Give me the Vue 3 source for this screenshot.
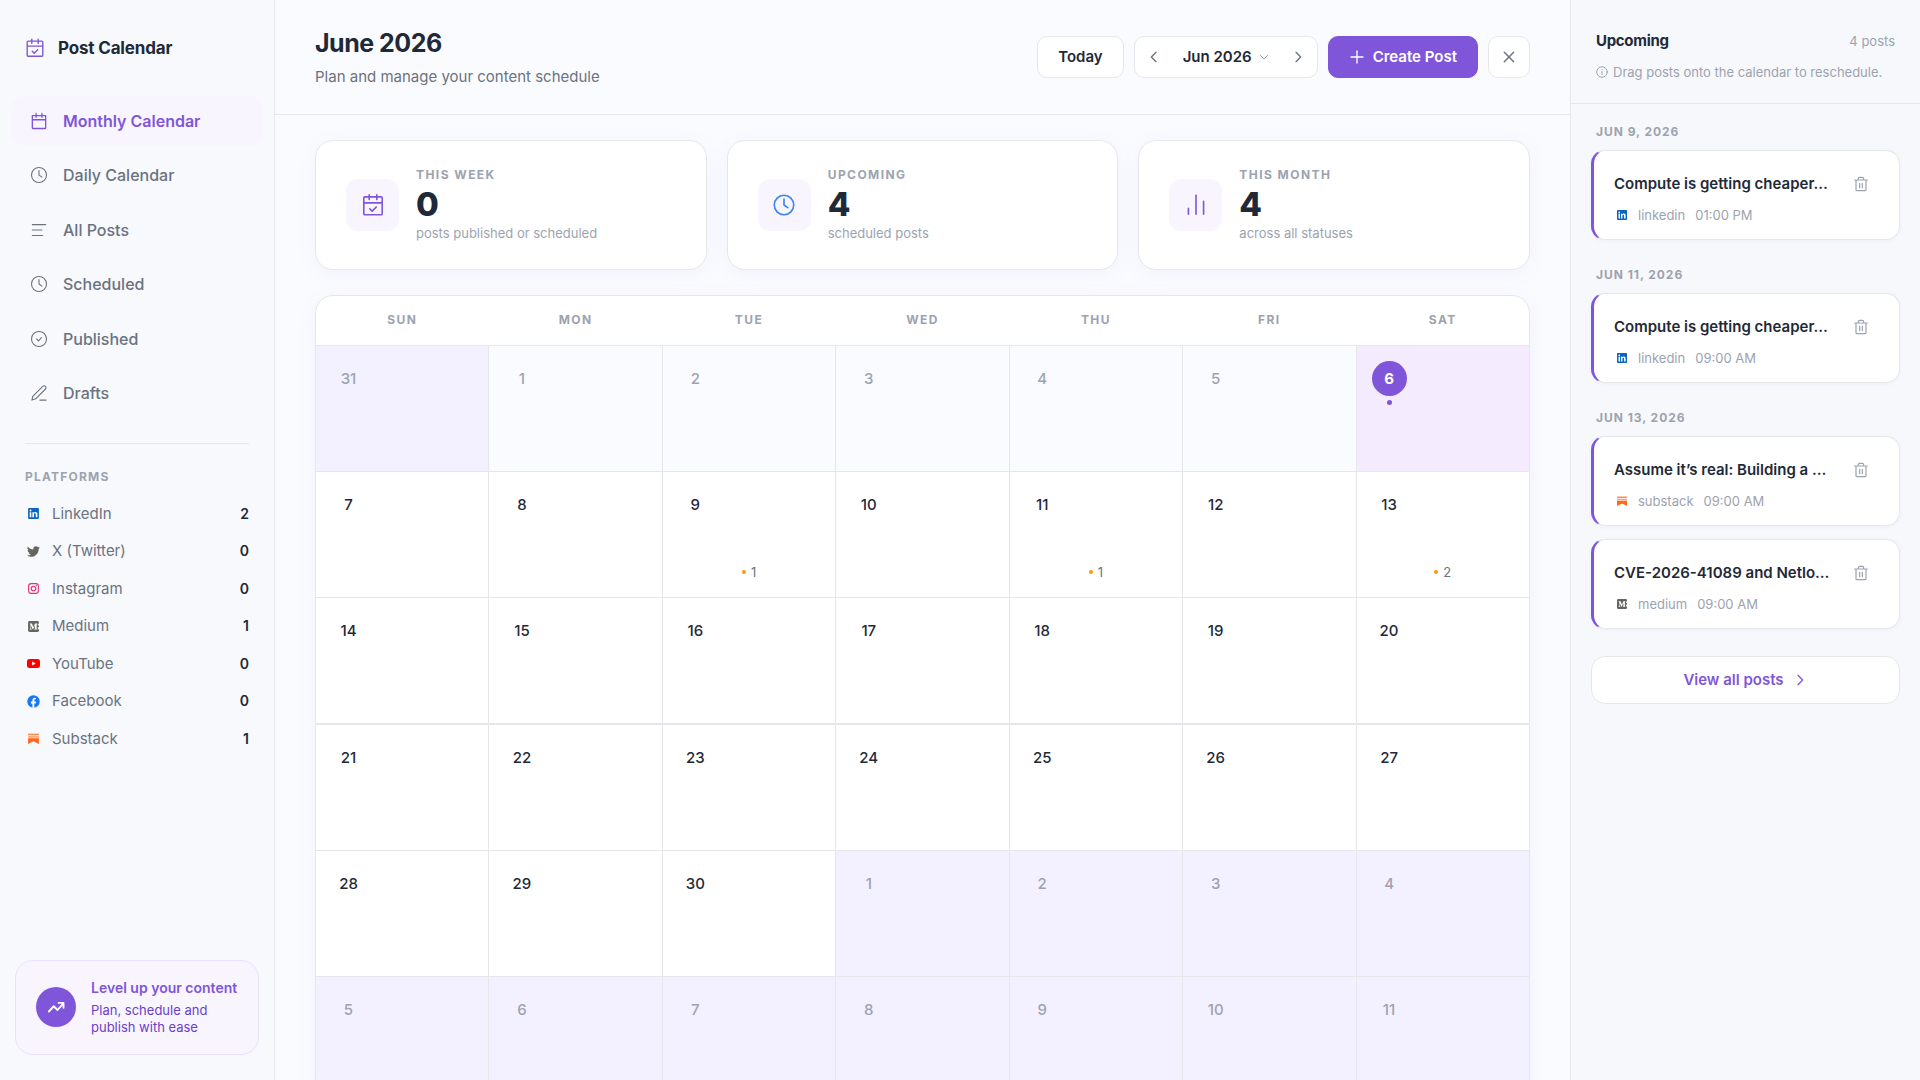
<script setup>
const nav = [
  { label: 'Monthly Calendar', icon: 'cal', active: true },
  { label: 'Daily Calendar', icon: 'clock' },
  { label: 'All Posts', icon: 'list' },
  { label: 'Scheduled', icon: 'clock' },
  { label: 'Published', icon: 'check' },
  { label: 'Drafts', icon: 'pen' },
]

const icons = {
  cal: '<path d="M4 5.500h16v14.500a1 1 0 0 1-1 1H5a1 1 0 0 1-1-1zM4 10.500h16M8.500 3v4.500M15.500 3v4.500"/>',
  calCheck: '<path d="M4.500 4.500h15a1 1 0 0 1 1 1V20a1 1 0 0 1-1 1h-15a1 1 0 0 1-1-1V5.500a1 1 0 0 1 1-1zM3.500 10h17M8.500 2.500V7M15.500 2.500V7M9 15.500l2.200 2.200L15 14"/>',
  clock: '<circle cx="12" cy="12" r="9"/><path d="M12 6.500V12l3.500 2.500"/>',
  list: '<path d="M4 5.500h16M4 12h11.500M4 18.500h12.500"/>',
  check: '<circle cx="12" cy="12" r="9"/><path d="M9.200 12l2.200 2.200 3.600-3.900"/>',
  pen: '<path d="M3.500 20.500l1-4.500L16.500 4a2.200 2.200 0 0 1 3.200 0 2.200 2.200 0 0 1 0 3.200L8 19zM13 20.500h7.500"/>',
  bars: '<path d="M5 20.500v-5.500M12 20.500V3M19 20.500V8.500"/>',
  info: '<circle cx="12" cy="12" r="10.500"/><path d="M12 11v6M12 7v.5"/>',
  trash: '<path d="M2.500 6h19M8 6V4a2 2 0 0 1 2-2h4a2 2 0 0 1 2 2v2M4.500 6v14.500a1.500 1.500 0 0 0 1.500 1.500h12a1.500 1.500 0 0 0 1.500-1.500V6M10 11v6.500M14 11v6.500"/>',
  left: '<path d="M15 5l-7 7 7 7"/>',
  right: '<path d="M9 5l7 7-7 7"/>',
  down: '<path d="M5 9l7 7 7-7"/>',
  plus: '<path d="M12 3v18M3 12h18"/>',
  close: '<path d="M4 4l16 16M20 4L4 20"/>',
  trend: '<path d="M2.500 18l6.500-7 5 5 8-9M15.500 6.500H22V13"/>',
}

const brands = {
  linkedin: '<path fill="#0a66c2" d="M3.500 2h17A1.500 1.500 0 0 1 22 3.500v17a1.500 1.500 0 0 1-1.500 1.500h-17A1.500 1.500 0 0 1 2 20.500v-17A1.500 1.500 0 0 1 3.500 2z"/><path fill="#fff" d="M5 9.500h3V19H5zM6.500 4.800a1.750 1.750 0 1 1 0 3.500 1.750 1.750 0 0 1 0-3.500zM9.900 9.500h2.900v1.300c.5-.9 1.600-1.600 3-1.600 2.700 0 3.400 1.700 3.400 4.200V19h-3v-5c0-1.300-.3-2.300-1.600-2.300s-1.700 1-1.700 2.300v5h-3z"/>',
  twitter: '<path fill="#66645e" d="M23.900 4.600a10 10 0 0 1-2.800.8 5 5 0 0 0 2.100-2.700 10 10 0 0 1-3.100 1.200 4.900 4.900 0 0 0-8.400 4.500A14 14 0 0 1 1.600 3.200a4.900 4.900 0 0 0 1.500 6.500 5 5 0 0 1-2.200-.6 4.900 4.900 0 0 0 3.900 4.900 5 5 0 0 1-2.200.1 4.900 4.900 0 0 0 4.600 3.400A9.900 9.900 0 0 1 0 19.500a14 14 0 0 0 7.500 2.200c9.100 0 14-7.500 14-14v-.6a10 10 0 0 0 2.400-2.500z"/>',
  instagram: '<g fill="none" stroke="#e1306c" stroke-width="2"><rect x="3" y="3" width="18" height="18" rx="5"/><circle cx="12" cy="12" r="4.200"/></g><circle cx="17.200" cy="6.800" r="1.200" fill="#e1306c"/>',
  medium: '<rect x="2" y="2" width="20" height="20" rx="2.500" fill="#66645e"/><path fill="#fff" d="M5 6.500h4l3 6.800 2.700-6.800H19v.6l-1.200 1v8l1.200 1v.6h-5.500v-.6l1.200-1V9.800l-3.400 7.900h-.5L7.300 10v5.300l1.600 1.900v.5H4.800v-.5l1.500-1.900V8.500L5 7.100z"/><path fill="#fff" d="M20 7h2v3h-2zM20 13h2v4h-2z"/>',
  youtube: '<rect x="0" y="3.500" width="24" height="17" rx="4.500" fill="#f00"/><path fill="#fff" d="M9.500 8.500l6.500 3.500-6.500 3.500z"/>',
  facebook: '<circle cx="12" cy="12" r="11.500" fill="#1877f2"/><path fill="#fff" d="M10 23.500v-8H7.200V12H10V9.500C10 6.700 11.700 5 14.300 5c1.100 0 2.400.2 2.400.2V8h-1.400c-1.300 0-1.800.8-1.800 1.700V12h3.100l-.5 3.500h-2.600v8z"/>',
  substack: '<path fill="#ff6719" fill-opacity=".75" d="M2 3h20v3H2z"/><path fill="#ff6719" fill-opacity=".6" d="M2 7.500h20v3H2z"/><path fill="#ff6719" d="M2 11.500h20V22l-10-5-10 5z"/>',
}

const platforms = [
  { name: 'LinkedIn', icon: 'linkedin', count: 2 },
  { name: 'X (Twitter)', icon: 'twitter', count: 0 },
  { name: 'Instagram', icon: 'instagram', count: 0 },
  { name: 'Medium', icon: 'medium', count: 1 },
  { name: 'YouTube', icon: 'youtube', count: 0 },
  { name: 'Facebook', icon: 'facebook', count: 0 },
  { name: 'Substack', icon: 'substack', count: 1 },
]

const stats = [
  { label: 'This week', value: 0, note: 'posts published or scheduled', icon: 'calCheck' },
  { label: 'Upcoming', value: 4, note: 'scheduled posts', icon: 'clock', blue: true },
  { label: 'This month', value: 4, note: 'across all statuses', icon: 'bars' },
]

const weekdays = ['Sun', 'Mon', 'Tue', 'Wed', 'Thu', 'Fri', 'Sat']
const scheduled = { 9: 1, 11: 1, 13: 2 }

// Six weeks, starting on Sunday 31 May 2026.
const weeks = Array.from({ length: 6 }, (_, w) =>
  Array.from({ length: 7 }, (_, d) => {
    const offset = w * 7 + d
    const inMonth = offset >= 1 && offset <= 30
    const day = offset === 0 ? 31 : inMonth ? offset : offset - 30
    return {
      day,
      outside: !inMonth,
      past: inMonth && day < 6,
      today: inMonth && day === 6,
      posts: inMonth ? scheduled[day] : undefined,
    }
  })
)

const groups = [
  { date: 'Jun 9, 2026', posts: [{ title: 'Compute is getting cheaper…', platform: 'linkedin', time: '01:00 PM' }] },
  { date: 'Jun 11, 2026', posts: [{ title: 'Compute is getting cheaper…', platform: 'linkedin', time: '09:00 AM' }] },
  {
    date: 'Jun 13, 2026',
    posts: [
      { title: 'Assume it’s real: Building a …', platform: 'substack', time: '09:00 AM' },
      { title: 'CVE-2026-41089 and Netlo…', platform: 'medium', time: '09:00 AM' },
    ],
  },
]
</script>

<template>
  <div class="app">
    <aside class="sidebar">
      <div class="brand">
        <svg class="icon brand-icon" viewBox="0 0 24 24" v-html="icons.calCheck"></svg>
        <span>Post Calendar</span>
      </div>

      <nav class="nav">
        <a v-for="item in nav" :key="item.label" href="#" class="nav-item" :class="{ active: item.active }">
          <svg class="icon" viewBox="0 0 24 24" v-html="icons[item.icon]"></svg>
          {{ item.label }}
        </a>
      </nav>

      <section class="platforms">
        <h2>Platforms</h2>
        <ul>
          <li v-for="p in platforms" :key="p.name">
            <svg class="mark" viewBox="0 0 24 24" v-html="brands[p.icon]"></svg>
            <span class="platform-name">{{ p.name }}</span>
            <span class="platform-count">{{ p.count }}</span>
          </li>
        </ul>
      </section>

      <div class="promo">
        <span class="promo-badge"><svg class="icon" viewBox="0 0 24 24" v-html="icons.trend"></svg></span>
        <div>
          <strong>Level up your content</strong>
          <p>Plan, schedule and publish with ease</p>
        </div>
      </div>
    </aside>

    <main class="main">
      <header class="topbar">
        <div>
          <h1>June 2026</h1>
          <p>Plan and manage your content schedule</p>
        </div>
        <div class="actions">
          <button type="button" class="btn">Today</button>
          <div class="stepper">
            <button type="button" class="step" aria-label="Previous month">
              <svg class="icon" viewBox="0 0 24 24" v-html="icons.left"></svg>
            </button>
            <button type="button" class="month">
              Jun 2026
              <svg class="icon" viewBox="0 0 24 24" v-html="icons.down"></svg>
            </button>
            <button type="button" class="step" aria-label="Next month">
              <svg class="icon" viewBox="0 0 24 24" v-html="icons.right"></svg>
            </button>
          </div>
          <button type="button" class="btn primary">
            <svg class="icon" viewBox="0 0 24 24" v-html="icons.plus"></svg>
            Create Post
          </button>
          <button type="button" class="btn close" aria-label="Close">
            <svg class="icon" viewBox="0 0 24 24" v-html="icons.close"></svg>
          </button>
        </div>
      </header>

      <div class="content">
        <section class="stats">
          <article v-for="s in stats" :key="s.label" class="stat">
            <span class="stat-icon" :class="{ blue: s.blue }">
              <svg class="icon" viewBox="0 0 24 24" v-html="icons[s.icon]"></svg>
            </span>
            <div>
              <h3>{{ s.label }}</h3>
              <strong>{{ s.value }}</strong>
              <p>{{ s.note }}</p>
            </div>
          </article>
        </section>

        <div class="calendar">
          <table>
            <thead>
              <tr>
                <th v-for="d in weekdays" :key="d" scope="col">{{ d }}</th>
              </tr>
            </thead>
            <tbody>
              <tr v-for="(week, w) in weeks" :key="w">
                <td v-for="(c, i) in week" :key="i" :class="{ outside: c.outside, past: c.past, today: c.today }">
                  <div class="cell">
                    <span class="day">{{ c.day }}</span>
                    <span v-if="c.today" class="today-dot"></span>
                    <span v-if="c.posts" class="posts"><i></i>{{ c.posts }}</span>
                  </div>
                </td>
              </tr>
            </tbody>
          </table>
        </div>
      </div>
    </main>

    <aside class="upcoming">
      <header class="up-head">
        <div class="up-title">
          <h2>Upcoming</h2>
          <span>4 posts</span>
        </div>
        <p>
          <svg class="icon" viewBox="0 0 24 24" v-html="icons.info"></svg>
          Drag posts onto the calendar to reschedule.
        </p>
      </header>

      <div class="up-body">
        <section v-for="g in groups" :key="g.date" class="group">
          <h3>{{ g.date }}</h3>
          <article v-for="p in g.posts" :key="p.title" class="post">
            <div class="post-top">
              <h4>{{ p.title }}</h4>
              <button type="button" aria-label="Delete post">
                <svg class="icon" viewBox="0 0 24 24" v-html="icons.trash"></svg>
              </button>
            </div>
            <div class="post-meta">
              <svg class="mark" viewBox="0 0 24 24" v-html="brands[p.platform]"></svg>
              <span>{{ p.platform }}</span>
              <time>{{ p.time }}</time>
            </div>
          </article>
        </section>
        <button type="button" class="view-all">
          View all posts
          <svg class="icon" viewBox="0 0 24 24" v-html="icons.right"></svg>
        </button>
      </div>
    </aside>
  </div>
</template>

<style>
body {
  margin: 0;
  background: #fafbff;
}
</style>

<style scoped>
.app {
  --ink: #1f2937;
  --muted: #6b7280;
  --faint: #9ca3af;
  --line: #e5e7eb;
  --violet: #7f56d9;
  --tint: #f9f5ff;
  display: grid;
  grid-template-rows: minmax(0, 1fr);
  grid-template-columns: 275px minmax(0, 1fr) 350px;
  height: 100vh;
  overflow: hidden;
  background: #fafbff;
  color: var(--ink);
  font: 400 15px/20px Inter, "Liberation Sans", sans-serif;
}

.app * {
  box-sizing: border-box;
}

h1, h2, h3, h4, p, ul {
  margin: 0;
  padding: 0;
}

ul {
  list-style: none;
}

a {
  color: inherit;
  text-decoration: none;
}

button {
  margin: 0;
  padding: 0;
  border: 0;
  background: none;
  color: inherit;
  font: inherit;
  cursor: pointer;
}

.icon {
  display: block;
  flex: none;
  width: 18px;
  height: 18px;
  fill: none;
  stroke: currentColor;
  stroke-width: 1.5;
  stroke-linecap: round;
  stroke-linejoin: round;
}

.mark {
  display: block;
  flex: none;
  width: 13px;
  height: 13px;
}

/* Sidebar */
.sidebar {
  display: flex;
  flex-direction: column;
  border-right: 1px solid var(--line);
  background: #f7f9fd;
}

.brand {
  display: flex;
  align-items: center;
  gap: 12px;
  padding: 36px 24px 36px;
  font-size: 17px;
  line-height: 24px;
  font-weight: 700;
  letter-spacing: -0.01em;
}

.brand-icon {
  width: 22px;
  height: 22px;
  color: var(--violet);
}

.nav {
  display: flex;
  flex-direction: column;
  justify-content: space-between;
  min-height: 322px;
  padding: 0 11px;
}

.nav-item {
  display: flex;
  align-items: center;
  gap: 14px;
  height: 50px;
  padding: 0 18px;
  border-radius: 14px;
  color: var(--muted);
  font-size: 16px;
  font-weight: 500;
}

.nav-item .icon {
  width: 20px;
  height: 20px;
  stroke-width: 1.3;
}

.nav-item.active {
  background: var(--tint);
  color: var(--violet);
  font-weight: 600;
}

.nav-item.active .icon {
  stroke-width: 1.6;
}

.platforms {
  margin: 25px 25px 0;
  padding-top: 24px;
  border-top: 1px solid var(--line);
}

.platforms h2 {
  margin-bottom: 9px;
  color: var(--faint);
  font-size: 12px;
  line-height: 18px;
  font-weight: 700;
  letter-spacing: 0.1em;
  text-transform: uppercase;
}

.platforms ul {
  display: flex;
  flex-direction: column;
  justify-content: space-between;
  min-height: 262px;
}

.platforms li {
  display: flex;
  align-items: center;
  height: 37px;
  padding-left: 2px;
  color: var(--muted);
}

.platform-name {
  flex: 1;
  padding-left: 12px;
}

.platform-count {
  color: var(--ink);
  font-size: 14px;
  font-weight: 600;
}

.promo {
  display: flex;
  align-items: center;
  gap: 15px;
  margin: auto 15px 25px;
  padding: 17px 20px 18px;
  border: 1px solid #e9e0ff;
  border-radius: 18px;
  background: var(--tint);
}

.promo-badge {
  display: grid;
  flex: none;
  place-items: center;
  width: 40px;
  height: 40px;
  border-radius: 50%;
  background: var(--violet);
  color: #fff;
}

.promo-badge .icon {
  stroke-width: 2.5;
}

.promo strong {
  display: block;
  color: var(--violet);
  font-size: 14px;
  line-height: 20px;
  font-weight: 600;
  white-space: nowrap;
}

.promo p {
  margin-top: 4px;
  color: #6941c6;
  font-size: 13px;
  line-height: 17px;
}

/* Top bar */
.main {
  min-width: 0;
  overflow: hidden;
}

.topbar {
  display: flex;
  align-items: center;
  justify-content: space-between;
  height: 115px;
  padding: 0 40px;
  border-bottom: 1px solid var(--line);
}

.topbar h1 {
  font-size: 25px;
  line-height: 32px;
  font-weight: 700;
  letter-spacing: -0.02em;
}

.topbar p {
  margin-top: 8px;
  color: var(--muted);
}

.actions {
  display: flex;
  gap: 10px;
}

.btn,
.stepper {
  display: flex;
  align-items: center;
  height: 42px;
  border: 1px solid var(--line);
  border-radius: 10px;
  background: #fff;
  font-weight: 600;
}

.btn {
  justify-content: center;
  padding: 0 20px;
}

.step {
  display: grid;
  place-items: center;
  width: 38px;
  height: 40px;
  color: var(--muted);
}

.step .icon {
  width: 16px;
  height: 16px;
  stroke-width: 2;
}

.month {
  display: flex;
  align-items: center;
  gap: 6px;
  height: 40px;
  padding: 0 9px 0 10px;
  font-weight: 600;
}

.month .icon {
  width: 12px;
  height: 12px;
  color: var(--faint);
  stroke-width: 2;
}

.primary {
  gap: 8px;
  border-color: var(--violet);
  background: var(--violet);
  color: #fff;
}

.primary .icon {
  width: 16px;
  height: 16px;
  stroke-width: 2;
}

.close {
  width: 42px;
  padding: 0;
  color: var(--muted);
}

.close .icon {
  width: 14px;
  height: 14px;
  stroke-width: 2.5;
}

.content {
  padding: 25px 40px 0;
}

/* Stat cards */
.stats {
  display: grid;
  grid-template-columns: repeat(3, minmax(0, 1fr));
  gap: 20px;
}

.stat,
.calendar {
  border: 1px solid var(--line);
  border-radius: 18px;
  background: #fff;
  box-shadow: 0 4px 20px rgba(127, 86, 217, 0.06);
}

.stat {
  display: flex;
  align-items: center;
  gap: 17px;
  height: 130px;
  padding: 0 30px;
}

.stat-icon {
  display: grid;
  place-items: center;
  width: 53px;
  height: 52px;
  border-radius: 12px;
  background: var(--tint);
  color: var(--violet);
}

.stat-icon.blue {
  color: #3b82f6;
}

.stat-icon .icon {
  width: 26px;
  height: 26px;
}

.stat h3 {
  color: var(--faint);
  font-size: 12px;
  line-height: 16px;
  font-weight: 700;
  letter-spacing: 0.12em;
  text-transform: uppercase;
}

.stat strong {
  display: block;
  margin: 3px 0 1px;
  font-size: 33px;
  line-height: 36px;
  font-weight: 800;
}

.stat p {
  color: var(--faint);
  font-size: 13px;
  line-height: 20px;
}

/* Calendar */
.calendar {
  margin-top: 25px;
  overflow: hidden;
}

table,
thead,
tbody {
  display: block;
  width: 100%;
}

tr {
  display: grid;
  grid-template-columns: repeat(7, minmax(0, 1fr));
  gap: 1px;
}

tbody tr {
  background: var(--line);
}

thead tr {
  border-bottom: 1px solid var(--line);
}

th {
  padding: 16px 0 17px;
  color: var(--faint);
  font-size: 12px;
  line-height: 16px;
  font-weight: 700;
  letter-spacing: 0.12em;
  text-align: center;
  text-transform: uppercase;
}

td {
  padding: 0;
  border-bottom: 1px solid var(--line);
  background: #fff;
}

/* Heavier rule at the middle of the month grid */
tbody tr:nth-child(3) td {
  border-bottom-width: 2px;
}

.cell {
  display: flex;
  flex-direction: column;
  align-items: flex-start;
  height: 125px;
  padding: 15px;
}

.day {
  display: grid;
  place-items: center;
  width: 35px;
  height: 35px;
  border-radius: 50%;
  font-weight: 500;
}

.past {
  background: #fafbff;
  color: var(--faint);
}

.outside {
  background: #f3f0ff;
  color: var(--faint);
}

.today {
  background: #f4ebff;
}

.today .day {
  background: var(--violet);
  color: #fff;
  font-weight: 700;
}

.today-dot {
  width: 5px;
  height: 5px;
  margin: 4px 15px;
  border-radius: 50%;
  background: var(--violet);
}

.posts {
  display: flex;
  align-items: center;
  align-self: center;
  gap: 5px;
  margin-top: auto;
  color: var(--muted);
  font-size: 13px;
  line-height: 20px;
}

.posts i {
  width: 4px;
  height: 4px;
  border-radius: 50%;
  background: #f59e0b;
}

/* Upcoming panel */
.upcoming {
  border-left: 1px solid var(--line);
  background: #f7f8fc;
}

.up-head {
  height: 104px;
  padding: 30px 25px 0;
  border-bottom: 1px solid var(--line);
}

.up-title {
  display: flex;
  align-items: center;
  justify-content: space-between;
}

.up-title h2 {
  font-size: 15px;
  line-height: 22px;
  font-weight: 700;
  letter-spacing: -0.02em;
}

.up-title span {
  color: var(--faint);
  font-size: 13px;
}

.up-head p {
  display: flex;
  align-items: center;
  gap: 5px;
  margin-top: 10px;
  color: var(--faint);
  font-size: 13px;
}

.up-head p .icon {
  width: 12px;
  height: 12px;
  stroke-width: 2;
}

.up-body {
  padding: 20px 20px 0;
}

.group {
  margin-bottom: 27px;
}

.group h3 {
  padding: 0 5px;
  margin-bottom: 10px;
  color: var(--faint);
  font-size: 12px;
  line-height: 16px;
  font-weight: 700;
  letter-spacing: 0.08em;
  text-transform: uppercase;
}

.post {
  height: 90px;
  padding: 21px 30px 0 20px;
  border: 1px solid var(--line);
  border-left: 3px solid var(--violet);
  border-radius: 14px;
  background: #fff;
  box-shadow: 0 1px 4px rgba(127, 86, 217, 0.06);
}

.post + .post {
  margin-top: 13px;
}

.post-top {
  display: flex;
  align-items: center;
  justify-content: space-between;
}

.post h4 {
  font-size: 15px;
  line-height: 24px;
  font-weight: 600;
  white-space: nowrap;
}

.post-top button {
  color: var(--faint);
}

.post-top .icon {
  width: 16px;
  height: 16px;
  stroke-width: 1.8;
}

.post-meta {
  display: flex;
  align-items: center;
  gap: 10px;
  margin-top: 9px;
  padding-left: 2px;
  color: var(--faint);
  font-size: 13px;
  line-height: 20px;
}

.post-meta .mark {
  width: 12px;
  height: 12px;
}

.view-all {
  display: flex;
  align-items: center;
  justify-content: center;
  gap: 8px;
  width: 100%;
  height: 48px;
  border: 1px solid var(--line);
  border-radius: 14px;
  background: #fff;
  color: var(--violet);
  font-weight: 600;
}

.view-all .icon {
  width: 16px;
  height: 16px;
  stroke-width: 2;
}
</style>
